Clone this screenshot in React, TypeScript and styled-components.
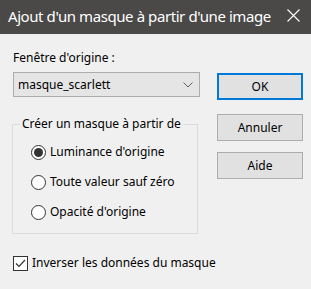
import React from 'react'
import styled, { createGlobalStyle } from 'styled-components'

const GlobalStyle = createGlobalStyle`
  body {
    margin: 0;
    background: #f0f0f0;
    font-family: "Noto Sans", "Open Sans", sans-serif;
  }
`

export default function App() {
  const options = ["Luminance d'origine", 'Toute valeur sauf zéro', "Opacité d'origine"]

  return (
    <>
      <GlobalStyle />
      <Window>
        <TitleBar>
          <Title>Ajout d'un masque à partir d'une image</Title>
          <CloseIcon width="13" height="13" viewBox="0 0 13 13">
            <path d="M0.5 0.5 L12.5 12.5 M12.5 0.5 L0.5 12.5" stroke="#ffffff" strokeWidth="1.1" fill="none" />
          </CloseIcon>
        </TitleBar>
        <Body>
          <LeftCol>
            <Label>Fenêtre d'origine :</Label>
            <Select>
              <span>masque_scarlett</span>
              <svg width="10" height="6" viewBox="0 0 10 6">
                <path d="M0.5 0.5 L5 5 L9.5 0.5" stroke="#606060" strokeWidth="1" fill="none" />
              </svg>
            </Select>
            <GroupBox>
              <Legend>Créer un masque à partir de</Legend>
              {options.map((label, i) => (
                <RadioRow key={label}>
                  <Radio $checked={i === 0} />
                  <span>{label}</span>
                </RadioRow>
              ))}
            </GroupBox>
            <CheckRow>
              <CheckBox>
                <svg width="13" height="13" viewBox="0 0 13 13">
                  <path d="M2 6.5 L5 9.5 L11 3" stroke="#333333" strokeWidth="1.2" fill="none" />
                </svg>
              </CheckBox>
              <span>Inverser les données du masque</span>
            </CheckRow>
          </LeftCol>
          <RightCol>
            <Button $primary>OK</Button>
            <Button $gap={14}>Annuler</Button>
            <Button $gap={11}>Aide</Button>
          </RightCol>
        </Body>
      </Window>
    </>
  )
}

const Window = styled.div`
  width: 311px;
  height: 289px;
  background: #f0f0f0;
  color: #000000;
  font-size: 12px;
  display: flex;
  flex-direction: column;
`

const TitleBar = styled.div`
  height: 34px;
  background: #4a4948;
  display: flex;
  align-items: center;
  justify-content: space-between;
  padding: 0 11px 0 8px;
`

const Title = styled.div`
  color: #ffffff;
  font-size: 15px;
  letter-spacing: -0.42px;
  line-height: 20px;
  margin-top: -2px;
  white-space: nowrap;
`

const CloseIcon = styled.svg`
  display: block;
  flex-shrink: 0;
  margin-top: -3px;
`

const Body = styled.div`
  display: flex;
  padding: 16px 0 0 13px;
`

const LeftCol = styled.div`
  width: 187px;
  flex-shrink: 0;
  display: flex;
  flex-direction: column;
`

const Label = styled.div`
  line-height: 16px;
`

const Select = styled.div`
  margin-top: 6px;
  height: 25px;
  box-sizing: border-box;
  border: 1px solid #adadad;
  background: #e5e5e5;
  display: flex;
  align-items: center;
  justify-content: space-between;
  padding: 0 6px 0 4px;
  line-height: 16px;
`

const GroupBox = styled.fieldset`
  margin: 19px 0 0 -1px;
  width: 186px;
  box-sizing: border-box;
  border: 1px solid #dcdcdc;
  padding: 5px 0 6px 18px;
  min-inline-size: 0;
`

const Legend = styled.legend`
  padding: 0 2px;
  margin-left: -11px;
  line-height: 16px;
`

const RadioRow = styled.div`
  height: 30px;
  display: flex;
  align-items: center;
  gap: 4px;
  line-height: 16px;
`

const Radio = styled.span<{ $checked?: boolean }>`
  width: 15px;
  height: 15px;
  box-sizing: border-box;
  border-radius: 50%;
  border: 1px solid #333333;
  background: #ffffff;
  display: flex;
  align-items: center;
  justify-content: center;
  &::after {
    content: '';
    width: 9px;
    height: 9px;
    border-radius: 50%;
    background: #333333;
    display: ${p => (p.$checked ? 'block' : 'none')};
  }
`

const CheckRow = styled.div`
  margin-top: 21px;
  display: flex;
  align-items: center;
  gap: 4px;
  line-height: 16px;
  white-space: nowrap;
`

const CheckBox = styled.span`
  width: 15px;
  height: 15px;
  flex-shrink: 0;
  box-sizing: border-box;
  border: 1px solid #333333;
  background: #ffffff;
  display: flex;
  align-items: center;
  justify-content: center;
`

const RightCol = styled.div`
  margin-left: 17px;
  padding-top: 23px;
  display: flex;
  flex-direction: column;
`

const Button = styled.div<{ $primary?: boolean; $gap?: number }>`
  width: 86px;
  height: 27px;
  box-sizing: border-box;
  margin-top: ${p => p.$gap ?? 0}px;
  background: #e1e1e1;
  border: ${p => (p.$primary ? '2px solid #0078d7' : '1px solid #adadad')};
  display: flex;
  align-items: center;
  justify-content: center;
  line-height: 16px;
`
